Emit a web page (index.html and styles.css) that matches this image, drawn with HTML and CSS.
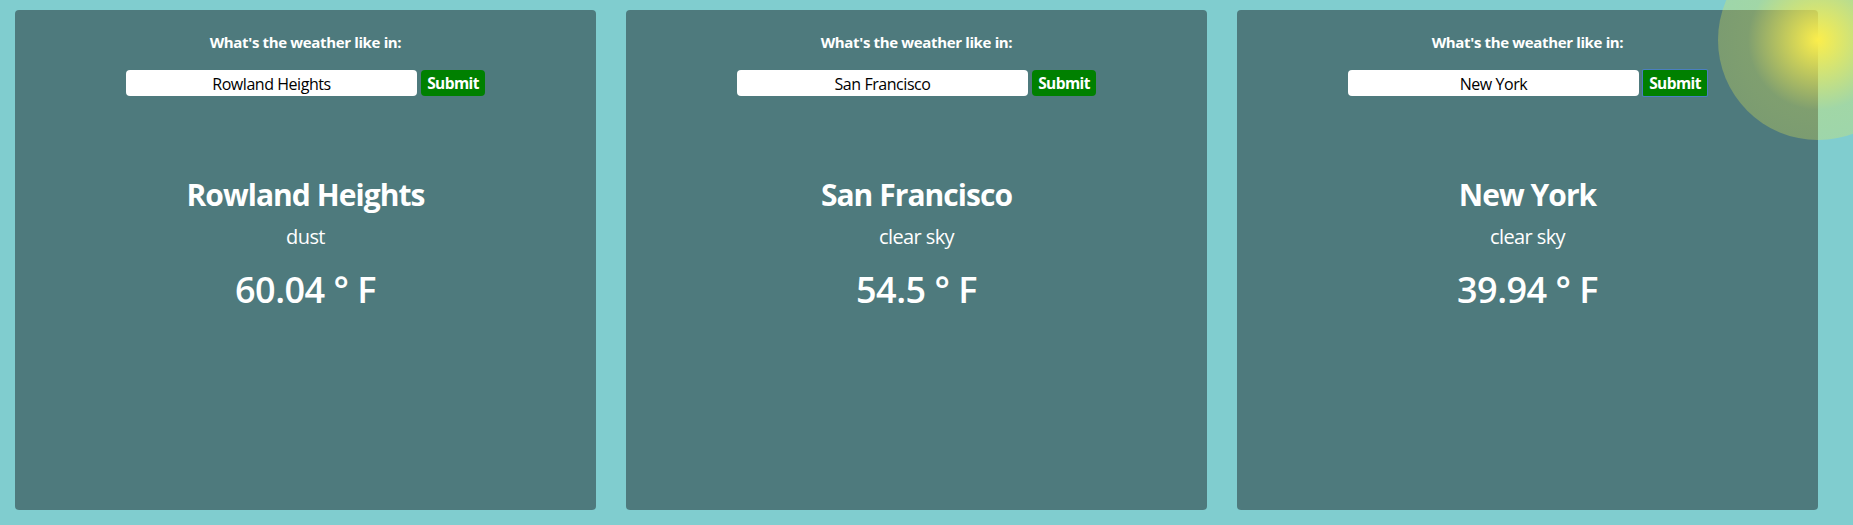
FILE: index.html
```
<!DOCTYPE html>
<html lang="en">
<head>
<meta charset="utf-8">
<title>Weather</title>
<link rel="stylesheet" href="styles.css">
</head>
<body>
<main class="cards">
  <section class="card">
    <form class="search">
      <label class="label" for="c1">What's the weather like in:</label>
      <div class="row"><input class="city-input" id="c1" type="text" value="Rowland Heights"><button class="submit" type="button">Submit</button></div>
    </form>
    <h1 class="city">Rowland Heights</h1>
    <p class="sky">dust</p>
    <p class="temp">60.04 ° F</p>
  </section>
  <section class="card">
    <form class="search">
      <label class="label" for="c2">What's the weather like in:</label>
      <div class="row"><input class="city-input" id="c2" type="text" value="San Francisco"><button class="submit" type="button">Submit</button></div>
    </form>
    <h1 class="city">San Francisco</h1>
    <p class="sky">clear sky</p>
    <p class="temp">54.5 ° F</p>
  </section>
  <section class="card">
    <form class="search">
      <label class="label" for="c3">What's the weather like in:</label>
      <div class="row"><input class="city-input" id="c3" type="text" value="New York"><button class="submit submit-focused" type="button">Submit</button></div>
    </form>
    <h1 class="city">New York</h1>
    <p class="sky">clear sky</p>
    <p class="temp">39.94 ° F</p>
  </section>
</main>
<div class="sun"></div>
</body>
</html>
```
FILE: styles.css
```
* { box-sizing: border-box; }
body {
  margin: 0;
  height: 525px;
  position: relative;
  overflow: hidden;
  background: #80cdcf;
  color: #fff;
  font-family: "Open Sans", "Noto Sans", sans-serif;
}
.cards {
  display: flex;
  gap: 30px;
  padding: 10px 15px;
}
.card {
  flex: 0 0 581px;
  height: 500px;
  padding-top: 20px;
  border-radius: 4px;
  background: #4e7a7d;
  text-align: center;
}
.search { height: 139px; }
.label {
  display: block;
  height: 40px;
  font-size: 15px;
  font-weight: 700;
  line-height: 24px;
  letter-spacing: -0.35px;
}
.row {
  display: flex;
  justify-content: center;
  gap: 4px;
}
.city-input, .submit {
  height: 26px;
  border: 0;
  border-radius: 4px;
  padding: 1px 0 0;
  font-family: inherit;
  font-size: 16px;
  line-height: 25px;
}
.city-input {
  width: 291px;
  background: #fff;
  color: #000;
  text-align: center;
  letter-spacing: -0.45px;
}
.submit {
  width: 64px;
  background: #008000;
  color: #fff;
  font-size: 15.5px;
  font-weight: 700;
  letter-spacing: -0.6px;
}
.submit-focused {
  border-radius: 1px;
  box-shadow: 0 0 0 1px #4a7fc0;
}
.city {
  margin: 0;
  font-size: 30px;
  font-weight: 700;
  line-height: 52px;
  letter-spacing: -0.95px;
}
.sky {
  margin: 0;
  font-size: 20px;
  line-height: 32px;
  letter-spacing: -0.6px;
}
.temp {
  margin: 0;
  padding-top: 11px;
  font-size: 36px;
  font-weight: 600;
  line-height: 52px;
  letter-spacing: -0.5px;
}
.sun {
  position: absolute;
  top: -60px;
  left: 1718px;
  width: 200px;
  height: 200px;
  border-radius: 50%;
  background: radial-gradient(circle closest-side, #fbee4c, rgba(228, 234, 84, 0.33) 70%, rgba(228, 234, 84, 0.3));
}
```
